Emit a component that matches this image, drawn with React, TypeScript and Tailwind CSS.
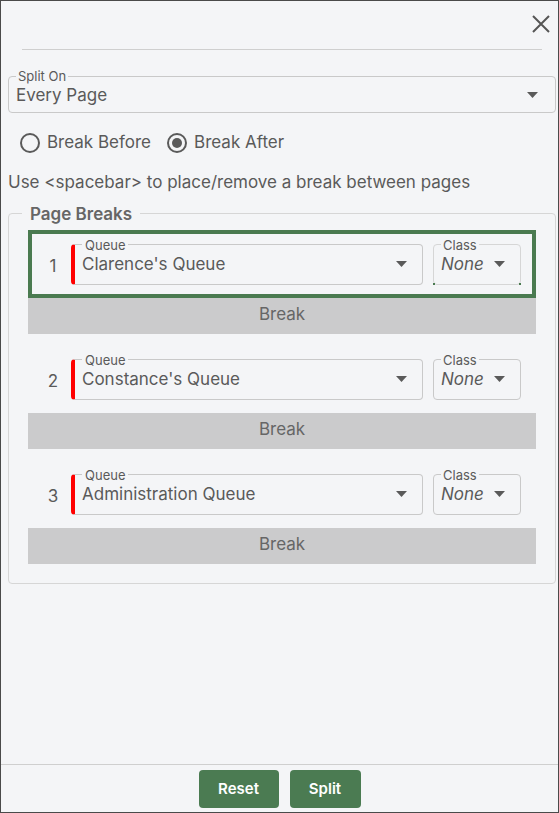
import React from "react";

const rows = [
  { n: 1, queue: "Clarence's Queue", active: true },
  { n: 2, queue: "Constance's Queue", active: false },
  { n: 3, queue: "Administration Queue", active: false },
];

function Caret() {
  return (
    <svg width="11" height="6" viewBox="0 0 11 6" className="shrink-0">
      <path d="M0 0 L11 0 L5.5 6 Z" fill="#5a5a5a" />
    </svg>
  );
}

function Radio({ checked, label }: { checked: boolean; label: string }) {
  return (
    <label className="flex items-center gap-[7px]">
      <span className="flex h-[20px] w-[20px] items-center justify-center rounded-full border-2 border-[#5a5a5a]">
        {checked && <span className="h-[10px] w-[10px] rounded-full bg-[#5a5a5a]" />}
      </span>
      <span>{label}</span>
    </label>
  );
}

function QueueRow({ n, queue, active }: { n: number; queue: string; active: boolean }) {
  return (
    <div>
      <div
        className={
          "flex h-[68px] items-start border-4 pt-[4px] " +
          (active ? "border-[#4a7a50]" : "border-transparent")
        }
      >
        <span className="mt-[18px] w-[39px] pl-[3px] text-center leading-[20px]">{n}</span>
        <fieldset className="h-[47px] w-[352px] rounded-[4px] border border-l-4 border-[#c9c9c9] border-l-[#ff0000] pl-[7px] pr-[15px]">
          <legend className="px-[3px] text-[13px] leading-[14px]">Queue</legend>
          <div className="mt-[2px] flex items-center justify-between">
            <span className="leading-[20px]">{queue}</span>
            <Caret />
          </div>
        </fieldset>
        <fieldset
          className={
            "relative ml-[10px] h-[47px] w-[88px] rounded-[4px] border pl-[7px] pr-[15px] " +
            (active ? "border-[#d6d6d6]" : "border-[#c9c9c9]")
          }
        >
          <legend className="px-[2px] text-[13px] leading-[14px]">Class</legend>
          <div className="mt-[2px] flex items-center justify-between">
            <span className="italic leading-[20px]">None</span>
            <Caret />
          </div>
          {active && (
            <>
              <span className="absolute -left-px -bottom-px h-[2px] w-[2px] bg-[#4a7a50]" />
              <span className="absolute -right-px -bottom-px h-[2px] w-[2px] bg-[#4a7a50]" />
            </>
          )}
        </fieldset>
      </div>
      <div className="flex h-[36px] items-center justify-center bg-[#cbcbcc] pb-[2px] text-[#666]">Break</div>
    </div>
  );
}

export default function App() {
  return (
    <div className="flex h-[813px] w-[559px] flex-col border border-[#4a4a4a] bg-[#f4f5f7] font-['Inter',sans-serif] text-[17px] text-[#5a5a5a]">
      <div className="flex h-[48px] items-start justify-end pr-[8px] pt-[14px]">
        <svg width="18" height="18" viewBox="0 0 18 18">
          <path d="M1 1 L17 17 M17 1 L1 17" stroke="#555" strokeWidth="2" />
        </svg>
      </div>
      <div className="ml-[21px] mr-[16px] h-px bg-[#cfcfcf]" />

      <div className="flex-1 pl-[7px] pr-[2px]">
        <fieldset className="mt-[19px] h-[44px] rounded-[4px] border border-[#c9c9c9] pl-[7px] pr-[17px]">
          <legend className="px-[2px] text-[13px] leading-[14px]">Split On</legend>
          <div className="mt-[2px] flex items-center justify-between">
            <span className="leading-[20px]">Every Page</span>
            <Caret />
          </div>
        </fieldset>

        <div className="ml-[12px] mt-[17px] flex gap-[16px]">
          <Radio checked={false} label="Break Before" />
          <Radio checked label="Break After" />
        </div>

        <p className="mt-[16px] leading-[20px]">Use &lt;spacebar&gt; to place/remove a break between pages</p>

        <fieldset className="mt-[12px] rounded-[4px] border border-[#d6d6d6] px-[19px] pb-[19px] pt-[6px]">
          <legend className="ml-[-6px] px-[8px] text-[17px] font-semibold leading-[20px] text-[#666]">
            Page Breaks
          </legend>
          <div className="flex flex-col gap-[11px]">
            {rows.map((r) => (
              <QueueRow key={r.n} {...r} />
            ))}
          </div>
        </fieldset>
      </div>

      <div className="flex h-[48px] justify-center gap-[11px] border-t border-[#cfcfcf] pt-[5px]">
        <button className="h-[38px] w-[80px] rounded-[4px] bg-[#4b7b52] text-[15px] font-semibold text-white">
          Reset
        </button>
        <button className="h-[38px] w-[71px] rounded-[4px] bg-[#4b7b52] text-[15px] font-semibold text-white">
          Split
        </button>
      </div>
    </div>
  );
}
